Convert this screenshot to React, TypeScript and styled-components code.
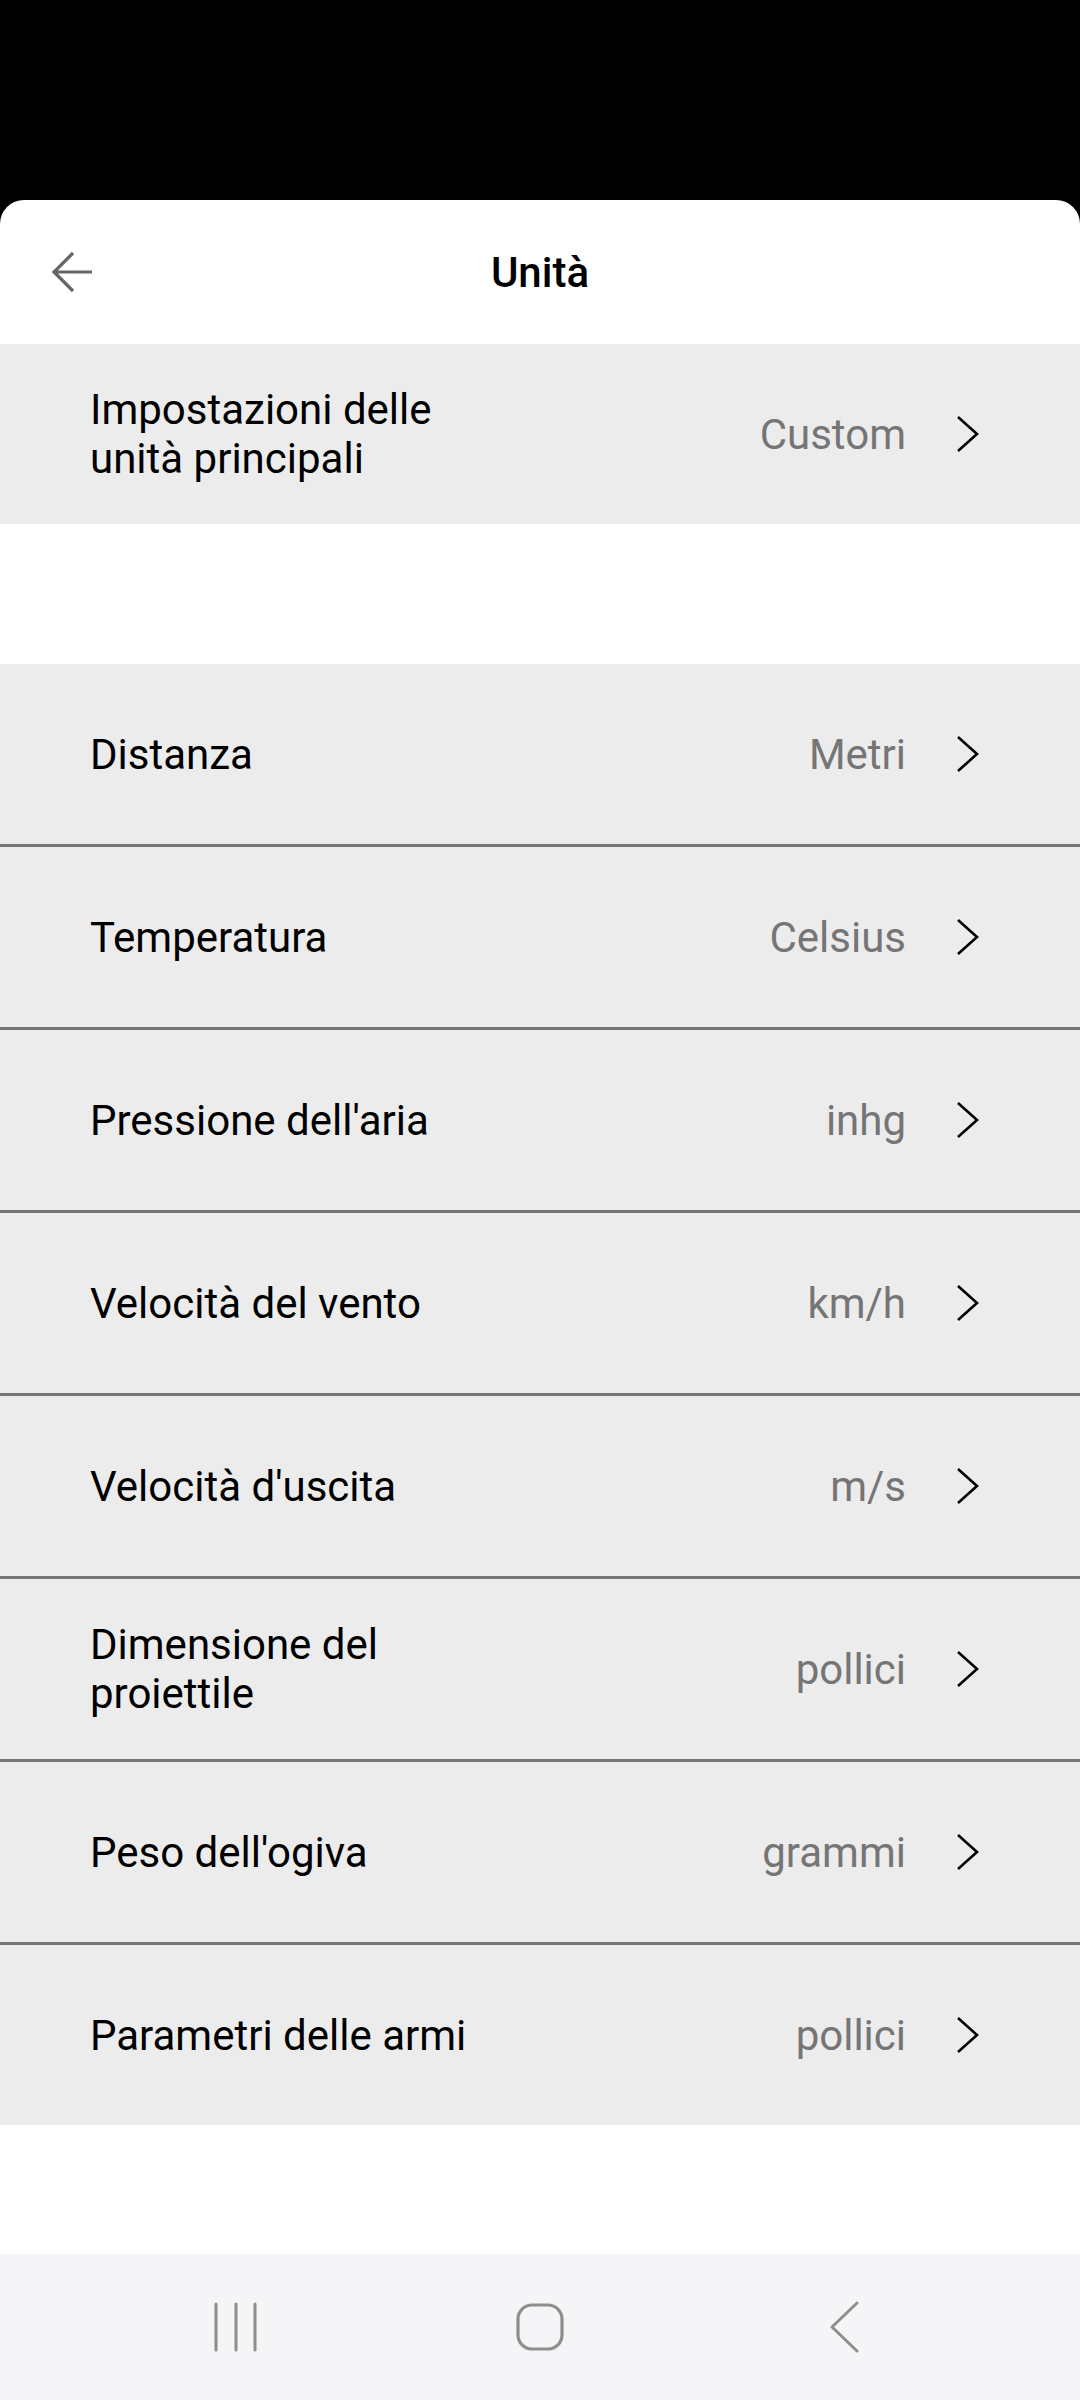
import styled, { createGlobalStyle } from "styled-components";

const GlobalStyle = createGlobalStyle`
  html, body {
    margin: 0;
    padding: 0;
    background: #000;
  }
  body {
    font-family: Roboto, "Noto Sans", "Liberation Sans", sans-serif;
  }
`;

// 행 데이터
const mainRow = { label: "Impostazioni delle unità principali", value: "Custom" };
const rows = [
  { label: "Distanza", value: "Metri" },
  { label: "Temperatura", value: "Celsius" },
  { label: "Pressione dell'aria", value: "inhg" },
  { label: "Velocità del vento", value: "km/h" },
  { label: "Velocità d'uscita", value: "m/s" },
  { label: "Dimensione del proiettile", value: "pollici" },
  { label: "Peso dell'ogiva", value: "grammi" },
  { label: "Parametri delle armi", value: "pollici" },
];

const Screen = styled.div`
  width: 1080px;
  height: 2400px;
  background: #000;
  padding-top: 200px;
  box-sizing: border-box;
  display: flex;
  flex-direction: column;
`;

const Sheet = styled.div`
  flex: 1;
  background: #fff;
  border-radius: 24px 24px 0 0;
  display: flex;
  flex-direction: column;
  overflow: hidden;
`;

const Header = styled.div`
  height: 144px;
  display: grid;
  grid-template-columns: 144px 1fr 144px;
  align-items: center;
`;

const BackButton = styled.div`
  display: flex;
  align-items: center;
  justify-content: center;
`;

const Title = styled.div`
  text-align: center;
  font-size: 42px;
  font-weight: 500;
  color: #000;
`;

const Group = styled.div<{ $gapTop?: number }>`
  margin-top: ${(p) => p.$gapTop ?? 0}px;
  display: flex;
  flex-direction: column;
  background: #ececec;
`;

const Row = styled.div<{ $divider?: boolean }>`
  height: 180px;
  display: flex;
  align-items: center;
  padding: 0 100px 0 90px;
  border-top: ${(p) => (p.$divider ? "3px solid #757575" : "none")};
`;

const Label = styled.div`
  flex: 1;
  font-size: 42px;
  line-height: 49px;
  color: #000;
`;

const LabelText = styled.span`
  display: inline-block;
  max-width: 400px;
`;

const Value = styled.div`
  font-size: 42px;
  color: #757575;
  margin-right: 50px;
`;

const Spacer = styled.div`
  flex: 1;
`;

const NavBar = styled.div`
  height: 146px;
  background: #f5f5f7;
  display: grid;
  grid-template-columns: repeat(3, 304px);
  align-items: center;
  justify-items: center;
  justify-content: center;
`;

const Chevron = () => (
  <svg width="24" height="36" viewBox="0 0 24 36">
    <path d="M2 1 L21 18 L2 35" fill="none" stroke="#000" strokeWidth="2.6" />
  </svg>
);

const BackArrow = () => (
  <svg width="42" height="42" viewBox="0 0 42 42">
    <path d="M41 21 H3 M22 2 L3 21 L22 40" fill="none" stroke="#666" strokeWidth="3.2" />
  </svg>
);

const SettingRow = ({ label, value, divider }: { label: string; value: string; divider?: boolean }) => (
  <Row $divider={divider}>
    <Label>
      <LabelText>{label}</LabelText>
    </Label>
    <Value>{value}</Value>
    <Chevron />
  </Row>
);

const App = () => {
  return (
    <Screen>
      <GlobalStyle />
      <Sheet>
        <Header>
          <BackButton>
            <BackArrow />
          </BackButton>
          <Title>Unità</Title>
          <div />
        </Header>
        <Group>
          <SettingRow label={mainRow.label} value={mainRow.value} />
        </Group>
        <Group $gapTop={140}>
          {rows.map((r, i) => (
            <SettingRow key={r.label} label={r.label} value={r.value} divider={i > 0} />
          ))}
        </Group>
        <Spacer />
        <NavBar>
          <svg width="48" height="50" viewBox="0 0 48 50">
            <path d="M4 2 V48 M24 2 V48 M43 2 V48" stroke="#8e8e8e" strokeWidth="3" strokeLinecap="round" />
          </svg>
          <svg width="50" height="50" viewBox="0 0 50 50">
            <rect x="3" y="3" width="44" height="44" rx="14" fill="none" stroke="#8e8e8e" strokeWidth="3.2" />
          </svg>
          <svg width="34" height="52" viewBox="0 0 34 52">
            <path d="M30 2 L5 26 L30 50" fill="none" stroke="#8e8e8e" strokeWidth="3" strokeLinecap="round" strokeLinejoin="round" />
          </svg>
        </NavBar>
      </Sheet>
    </Screen>
  );
};

export default App;
